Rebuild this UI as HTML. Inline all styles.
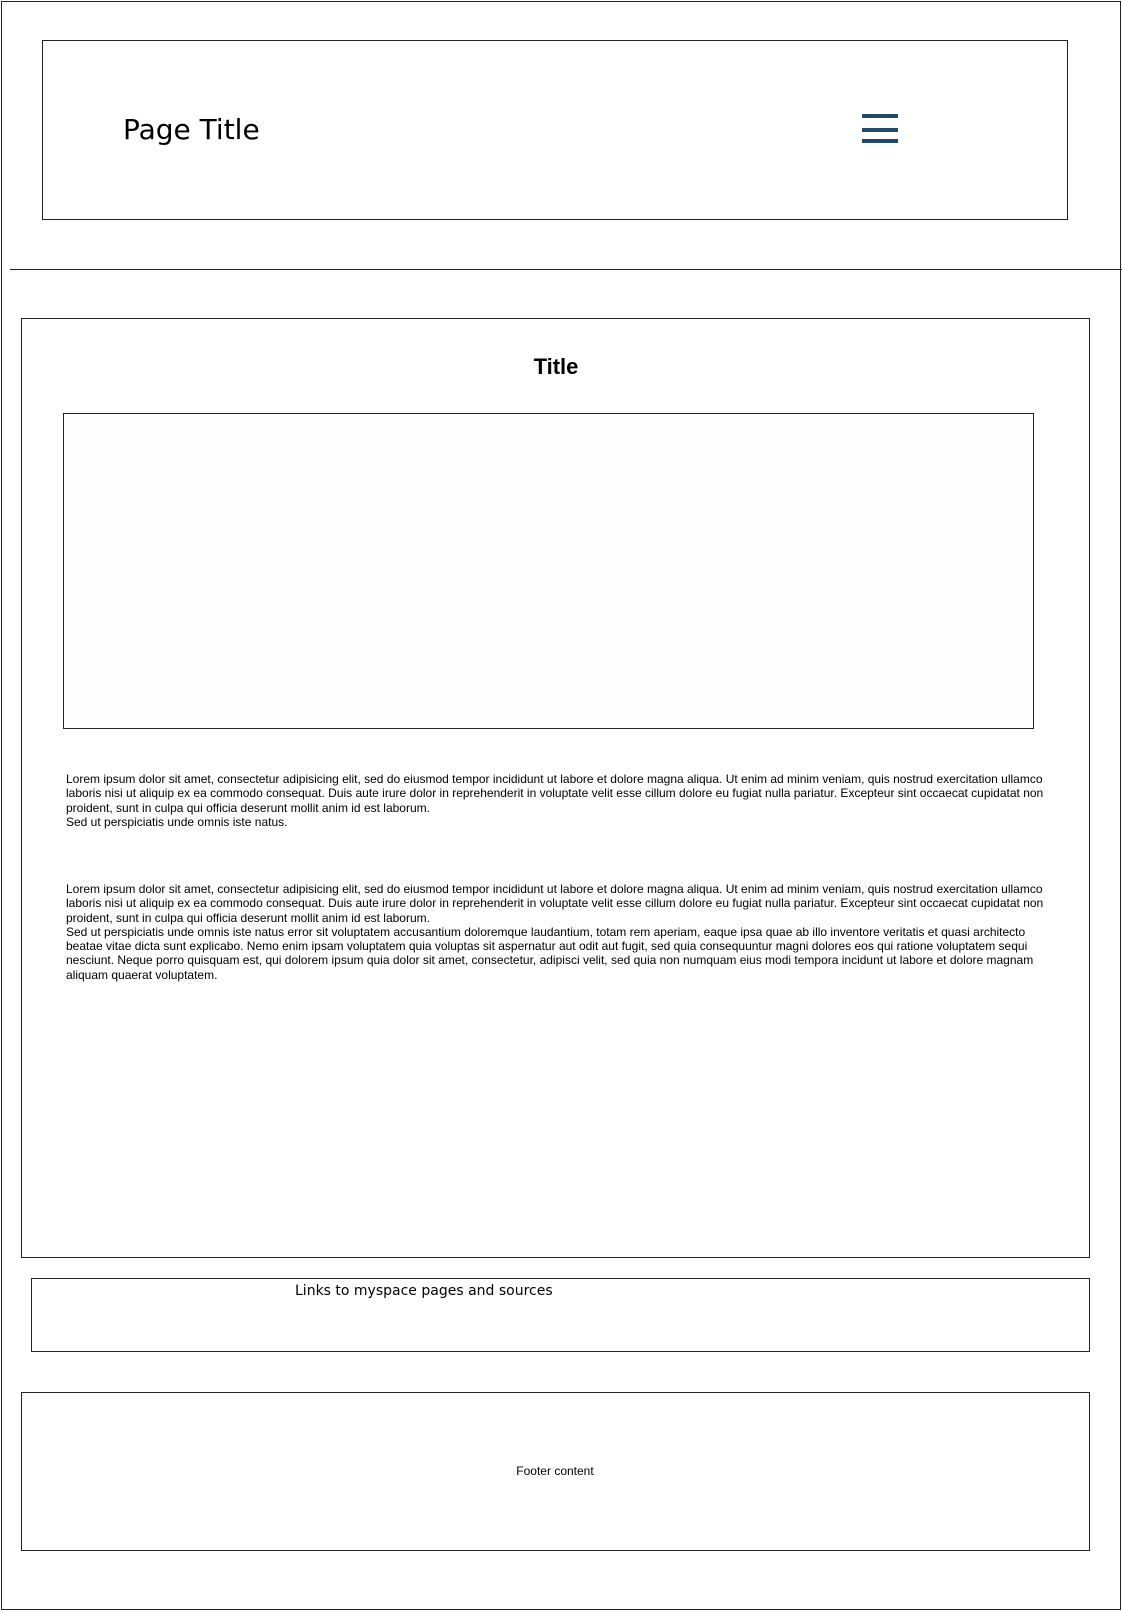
<!DOCTYPE html>
<html><head><meta charset="utf-8"><style>
html,body{margin:0;padding:0;background:#fff;}
body{width:1122px;height:1612px;position:relative;overflow:hidden;font-family:"Liberation Sans",Arial,sans-serif;}
.b{position:absolute;border:1.3px solid #222;box-sizing:border-box;}
.t{position:absolute;white-space:nowrap;color:#000;}
p{margin:0;}
.para{position:absolute;left:66px;width:982px;font-size:12px;line-height:14.3px;color:#000;}
.bar{position:absolute;left:862px;width:36px;height:4px;background:#1f4a6a;}
</style></head><body>
<div class="b" style="left:1px;top:1px;width:1120px;height:1609px;"></div>
<div class="b" style="left:42px;top:40px;width:1026px;height:180px;"></div>
<div class="t" style="left:123px;top:113px;font-family:'DejaVu Sans',sans-serif;font-size:28px;">Page Title</div>
<div class="bar" style="top:114px"></div>
<div class="bar" style="top:128px"></div>
<div class="bar" style="top:139px"></div>
<div style="position:absolute;left:10px;top:269px;width:1112px;height:0;border-top:1.3px solid #222;"></div>
<div class="b" style="left:21px;top:318px;width:1069px;height:940px;"></div>
<div class="t" style="left:0;width:1112px;text-align:center;top:354px;font-size:22px;font-weight:bold;">Title</div>
<div class="b" style="left:63px;top:413px;width:971px;height:316px;background:#fefefe;border-width:1px;"></div>
<div class="para" style="top:772px;">Lorem ipsum dolor sit amet, consectetur adipisicing elit, sed do eiusmod tempor incididunt ut labore et dolore magna aliqua. Ut enim ad minim veniam, quis nostrud exercitation ullamco laboris nisi ut aliquip ex ea commodo consequat. Duis aute irure dolor in reprehenderit in voluptate velit esse cillum dolore eu fugiat nulla pariatur. Excepteur sint occaecat cupidatat non proident, sunt in culpa qui officia deserunt mollit anim id est laborum.<br>Sed ut perspiciatis unde omnis iste natus.</div>
<div class="para" style="top:882px;">Lorem ipsum dolor sit amet, consectetur adipisicing elit, sed do eiusmod tempor incididunt ut labore et dolore magna aliqua. Ut enim ad minim veniam, quis nostrud exercitation ullamco laboris nisi ut aliquip ex ea commodo consequat. Duis aute irure dolor in reprehenderit in voluptate velit esse cillum dolore eu fugiat nulla pariatur. Excepteur sint occaecat cupidatat non proident, sunt in culpa qui officia deserunt mollit anim id est laborum.<br>Sed ut perspiciatis unde omnis iste natus error sit voluptatem accusantium doloremque laudantium, totam rem aperiam, eaque ipsa quae ab illo inventore veritatis et quasi architecto beatae vitae dicta sunt explicabo. Nemo enim ipsam voluptatem quia voluptas sit aspernatur aut odit aut fugit, sed quia consequuntur magni dolores eos qui ratione voluptatem sequi nesciunt. Neque porro quisquam est, qui dolorem ipsum quia dolor sit amet, consectetur, adipisci velit, sed quia non numquam eius modi tempora incidunt ut labore et dolore magnam aliquam quaerat voluptatem.</div>
<div class="b" style="left:31px;top:1278px;width:1059px;height:74px;"></div>
<div class="t" style="left:295px;top:1283px;font-family:'DejaVu Sans',sans-serif;font-size:14px;">Links to myspace pages and sources</div>
<div class="b" style="left:21px;top:1392px;width:1069px;height:159px;"></div>
<div class="t" style="left:0;width:1110px;text-align:center;top:1464px;font-size:12px;">Footer content</div>
</body></html>
